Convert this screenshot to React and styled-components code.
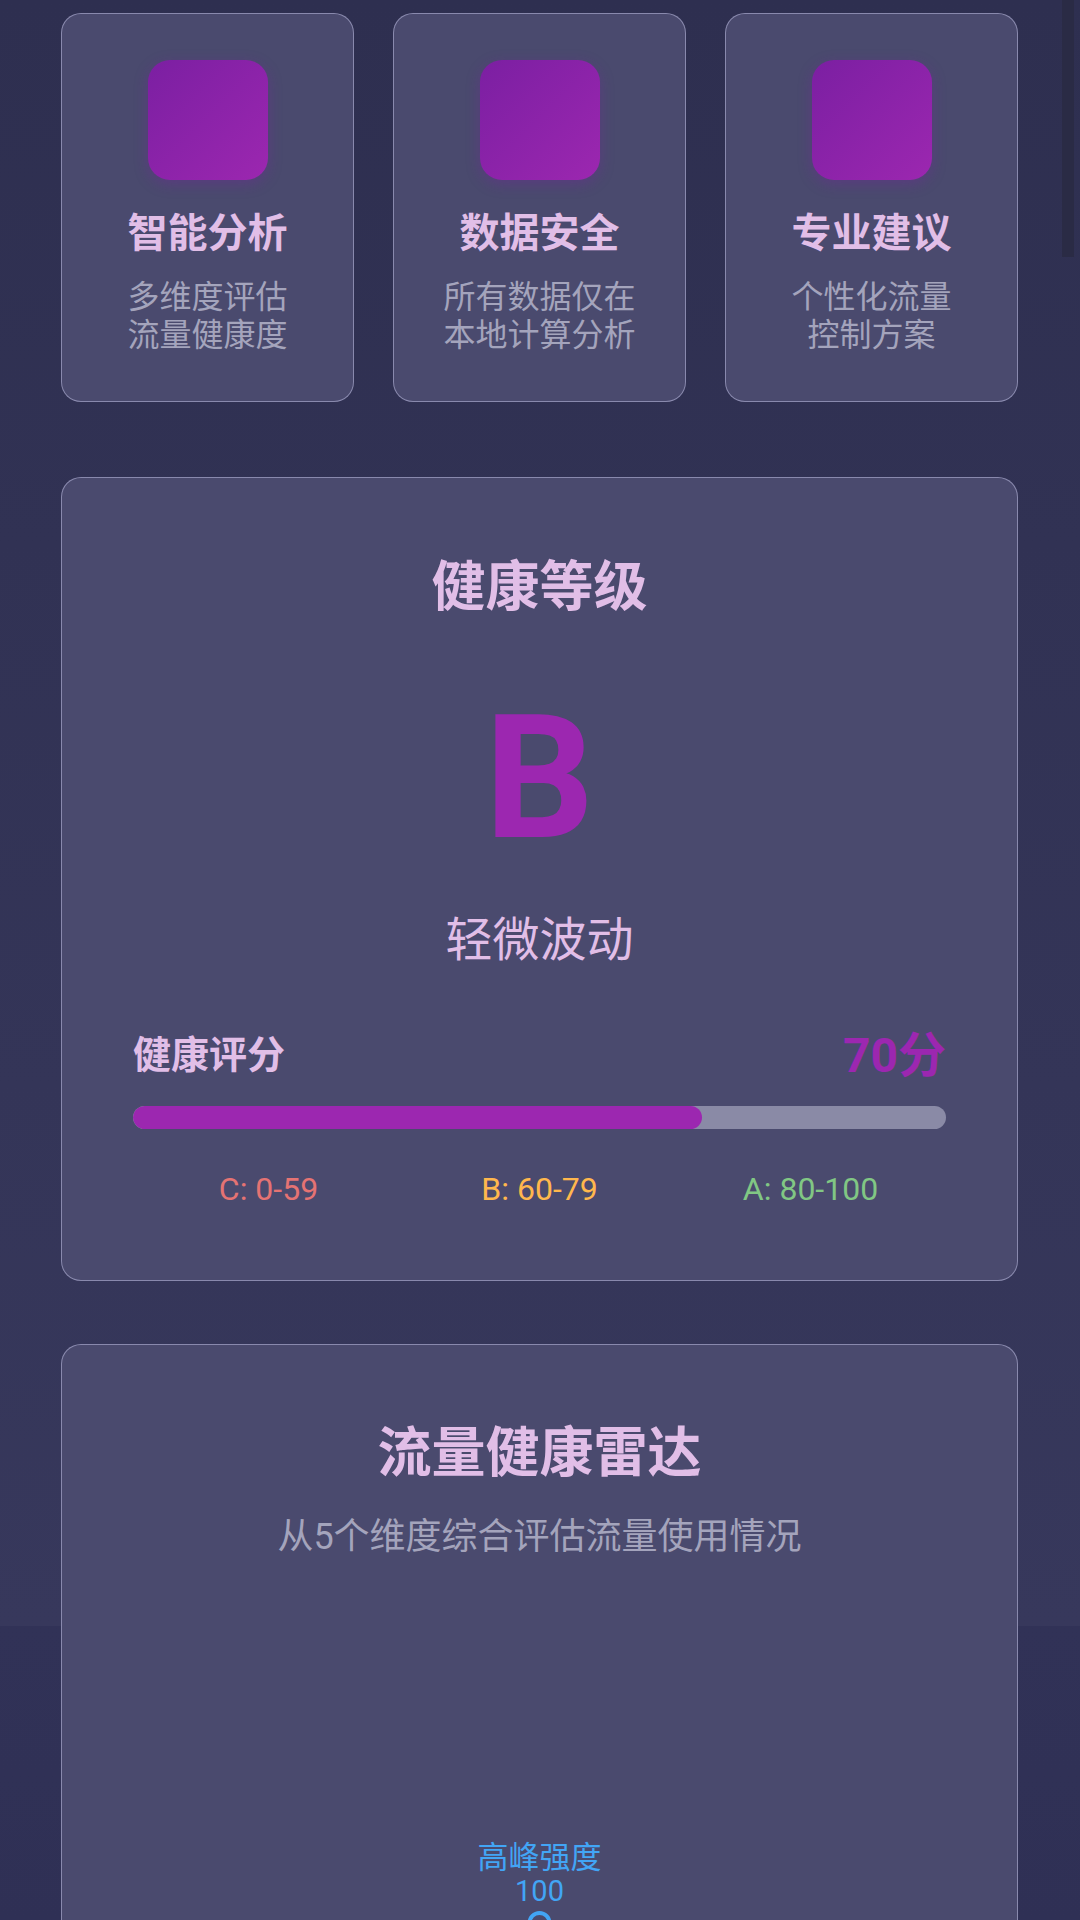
import styled, { createGlobalStyle } from "styled-components";

const GlobalStyle = createGlobalStyle`
  html, body {
    margin: 0;
    padding: 0;
  }
  body {
    font-family: Roboto, "Noto Sans CJK SC", "Noto Sans", sans-serif;
    background: #313257;
  }
`;

const Page = styled.div`
  width: 1080px;
  min-height: 1920px;
  box-sizing: border-box;
  padding: 13px 62px 80px 61px;
  background: linear-gradient(
    180deg,
    #2e2f50 0px,
    #37385c 1626px,
    #313257 1626px,
    #2f3055 1920px
  );
  display: flex;
  flex-direction: column;
`;

const ScrollThumb = styled.div`
  position: fixed;
  top: 0;
  right: 6px;
  width: 12px;
  height: 257px;
  background: #2a2b45;
`;

const Features = styled.div`
  display: grid;
  grid-template-columns: repeat(3, 1fr);
  gap: 39px;
`;

const GlassCard = styled.div`
  background: #4a4a6e;
  border: 1.5px solid rgba(190, 190, 225, 0.55);
  border-radius: 20px;
  box-sizing: border-box;
`;

const FeatureCard = styled(GlassCard)`
  height: 389px;
  padding: 46px 16px 0;
  display: flex;
  flex-direction: column;
  align-items: center;
  text-align: center;
`;

const IconBox = styled.div`
  width: 120px;
  height: 120px;
  border-radius: 22px;
  background: linear-gradient(135deg, #7b1fa2 0%, #9c27b0 100%);
  box-shadow: 0 4px 14px rgba(123, 31, 162, 0.35);
`;

const FeatureTitle = styled.div`
  margin-top: 28px;
  font-size: 40px;
  line-height: 52px;
  font-weight: 700;
  color: #e1bee7;
`;

const FeatureDesc = styled.div`
  margin-top: 18px;
  font-size: 32px;
  line-height: 38px;
  color: #a4a4bc;
`;

const GradeCard = styled(GlassCard)`
  margin-top: 75px;
  padding: 75px 71px 70px;
  display: flex;
  flex-direction: column;
  align-items: center;
`;

const CardTitle = styled.div`
  font-size: 54px;
  line-height: 70px;
  font-weight: 700;
  color: #e1bee7;
`;

const GradeLetter = styled.div`
  margin-top: 69px;
  font-size: 172px;
  line-height: 1;
  font-weight: 700;
  color: #9c27b0;
`;

const GradeText = styled.div`
  margin-top: 45px;
  font-size: 47px;
  line-height: 61px;
  color: #e1bee7;
`;

const ScoreRow = styled.div`
  align-self: stretch;
  margin-top: 50px;
  height: 62px;
  display: flex;
  justify-content: space-between;
  align-items: center;
`;

const ScoreLabel = styled.div`
  font-size: 38px;
  font-weight: 700;
  color: #e1bee7;
`;

const ScoreValue = styled.div`
  font-size: 48px;
  font-weight: 700;
  color: #9c27b0;
`;

const BarTrack = styled.div`
  align-self: stretch;
  margin-top: 24px;
  height: 23px;
  border-radius: 12px;
  background: #8a8aa6;
  overflow: hidden;
`;

const BarFill = styled.div`
  height: 100%;
  border-radius: 12px;
  background: #9c27b0;
`;

const Ranges = styled.div`
  align-self: stretch;
  margin-top: 39px;
  display: flex;
`;

const Range = styled.div`
  flex: 1;
  text-align: center;
  font-size: 32px;
  line-height: 42px;
  color: ${(p) => p.color};
`;

const RadarCard = styled(GlassCard)`
  margin-top: 63px;
  padding: 74px 71px 40px;
  display: flex;
  flex-direction: column;
  align-items: center;
`;

const Subtitle = styled.div`
  margin-top: 24px;
  font-size: 36px;
  line-height: 48px;
  color: #a4a4bc;
`;

const Chart = styled.svg`
  margin-top: 16px;
  display: block;
`;

const features = [
  { title: "智能分析", desc: ["多维度评估", "流量健康度"] },
  { title: "数据安全", desc: ["所有数据仅在", "本地计算分析"] },
  { title: "专业建议", desc: ["个性化流量", "控制方案"] },
];

const ranges = [
  { label: "C: 0-59", color: "#e57373" },
  { label: "B: 60-79", color: "#ffb74d" },
  { label: "A: 80-100", color: "#81c784" },
];

// radar: 5 axes, only the top one reaches into the shot
const radarAxes = [
  { name: "高峰强度", value: 100 },
  { name: "使用均衡", value: 70 },
  { name: "夜间占比", value: 60 },
  { name: "波动程度", value: 55 },
  { name: "增长趋势", value: 75 },
];

function Radar() {
  const w = 815;
  const h = 760;
  const cx = w / 2;
  const cy = 616;
  const r = 270;
  const pts = radarAxes.map((a, i) => {
    const ang = -Math.PI / 2 + (i * 2 * Math.PI) / radarAxes.length;
    const k = (a.value / 100) * r;
    return [cx + Math.cos(ang) * k, cy + Math.sin(ang) * k];
  });
  return (
    <Chart width={w} height={h} viewBox={`0 0 ${w} ${h}`}>
      <text
        x={cx}
        y={291}
        textAnchor="middle"
        fontSize="31"
        fill="#42a5f5"
        fontFamily='Roboto, "Noto Sans CJK SC", sans-serif'
      >
        {radarAxes[0].name}
      </text>
      <text
        x={cx}
        y={324}
        textAnchor="middle"
        fontSize="29"
        fill="#42a5f5"
        fontFamily='Roboto, "Noto Sans CJK SC", sans-serif'
      >
        {radarAxes[0].value}
      </text>
      <polygon
        points={pts.map((p) => p.join(",")).join(" ")}
        fill="rgba(66,165,245,0.2)"
        stroke="#42a5f5"
        strokeWidth="3"
      />
      <circle
        cx={cx}
        cy={cy - r}
        r="10"
        fill="#4a4a6e"
        stroke="#42a5f5"
        strokeWidth="4"
      />
    </Chart>
  );
}

export default function App() {
  return (
    <>
      <GlobalStyle />
      <Page>
        <Features>
          {features.map((f) => (
            <FeatureCard key={f.title}>
              <IconBox />
              <FeatureTitle>{f.title}</FeatureTitle>
              <FeatureDesc>
                {f.desc.map((d) => (
                  <div key={d}>{d}</div>
                ))}
              </FeatureDesc>
            </FeatureCard>
          ))}
        </Features>

        <GradeCard>
          <CardTitle>健康等级</CardTitle>
          <GradeLetter>B</GradeLetter>
          <GradeText>轻微波动</GradeText>
          <ScoreRow>
            <ScoreLabel>健康评分</ScoreLabel>
            <ScoreValue>70分</ScoreValue>
          </ScoreRow>
          <BarTrack>
            <BarFill style={{ width: "70%" }} />
          </BarTrack>
          <Ranges>
            {ranges.map((r) => (
              <Range key={r.label} color={r.color}>
                {r.label}
              </Range>
            ))}
          </Ranges>
        </GradeCard>

        <RadarCard>
          <CardTitle>流量健康雷达</CardTitle>
          <Subtitle>从5个维度综合评估流量使用情况</Subtitle>
          <Radar />
        </RadarCard>
      </Page>
      <ScrollThumb />
    </>
  );
}
